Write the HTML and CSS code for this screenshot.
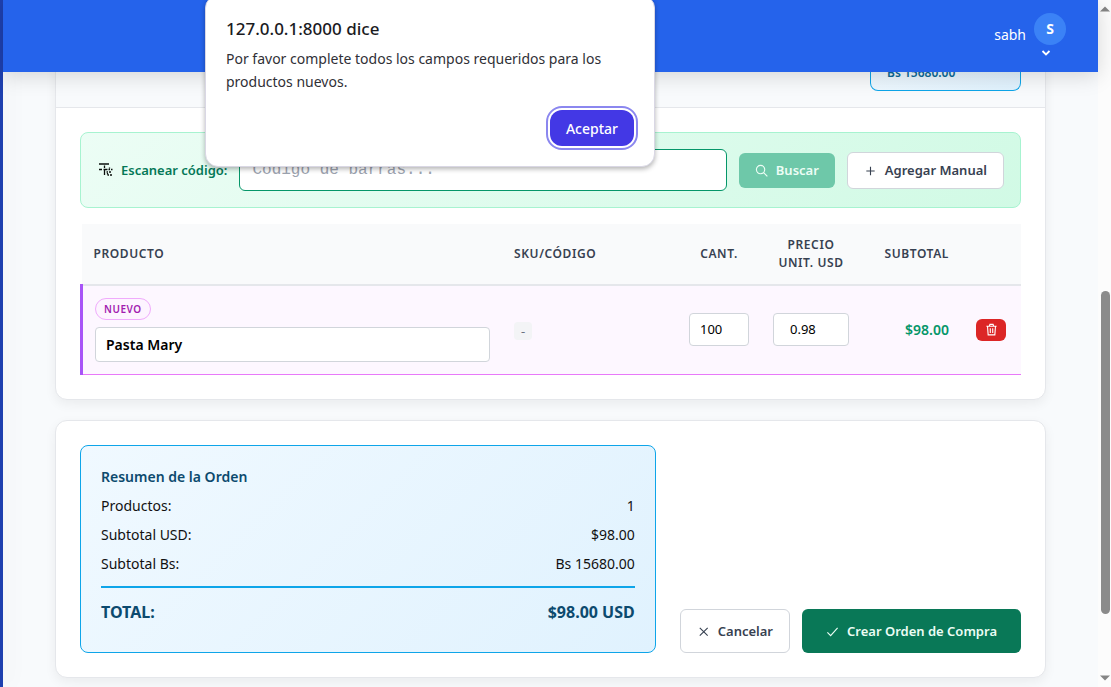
FILE: index.html
```html
<!DOCTYPE html>
<html lang="es">
<head>
<meta charset="utf-8">
<meta name="viewport" content="width=device-width, initial-scale=1">
<title>Orden de Compra</title>
<link rel="stylesheet" href="styles.css">
</head>
<body>
<div class="app">
  <div class="sidebar-edge"></div>
  <div class="page">
    <header class="topbar">
      <span class="user-name">sabh</span>
      <button class="user-menu" type="button" aria-label="Menú de usuario">
        <span class="avatar">S</span>
        <svg class="chevron" viewBox="0 0 12 8" aria-hidden="true"><path d="M2.500 2 6 5.500 9.500 2" fill="none" stroke="currentColor" stroke-width="1.800"/></svg>
      </button>
    </header>
    <main class="content">
      <section class="card card-products">
        <div class="card-head"><div class="rate">Bs 15680.00</div></div>
        <div class="card-body">
          <form class="scan">
            <label class="scan-label" for="code">
              <svg class="scan-icon" viewBox="0 0 16 16" aria-hidden="true"><path d="M2 2h10M2 7.500h3M6.500 7.500h4M11.500 7.500h1.500M14 7.500h1.500M7.500 3.500v2.500M7.500 8v5M9.500 10h1.500M12 10h2M12.500 5.500v1M10.500 13h1.500M13 13h2M10.500 11v1.500" fill="none" stroke="#0b0f0d" stroke-width="1.300"/></svg>
              Escanear código:
            </label>
            <input class="scan-input" id="code" type="text" placeholder="Código de barras...">
            <button class="btn btn-search" type="button" disabled>
              <svg class="icon" viewBox="0 0 14 14" aria-hidden="true"><circle cx="6" cy="6" r="4.500"/><path d="m9.300 9.300 4 4"/></svg>Buscar
            </button>
            <button class="btn btn-outline" type="button">
              <svg class="icon" viewBox="0 0 14 14" aria-hidden="true"><path d="M7 3v9M2.500 7.500h9"/></svg>Agregar Manual
            </button>
          </form>
          <table class="items">
            <colgroup><col><col class="col-sku"><col class="col-qty"><col class="col-price"><col class="col-sub"><col class="col-act"></colgroup>
            <thead>
              <tr><th class="left">Producto</th><th class="left">SKU/Código</th><th>Cant.</th><th>Precio Unit. USD</th><th class="right">Subtotal</th><th></th></tr>
            </thead>
            <tbody>
              <tr>
                <td><div class="product"><span class="tag">NUEVO</span><input class="field field-name" type="text" value="Pasta Mary" aria-label="Producto"></div></td>
                <td><span class="sku">-</span></td>
                <td class="entry"><input class="field field-num" type="text" value="100" aria-label="Cantidad"></td>
                <td class="entry"><input class="field field-num field-price" type="text" value="0.98" aria-label="Precio unitario USD"></td>
                <td class="entry right amount">$98.00</td>
                <td class="entry center"><button class="btn-delete" type="button" aria-label="Eliminar">
                  <svg viewBox="0 0 14 14" aria-hidden="true"><path d="M1.500 3.500h11M4.700 3.500l.6-2h3.400l.6 2M2.700 3.500l.7 9.300h7.200l.7-9.300M5.700 5.700v5M8.300 5.700v5"/></svg>
                </button></td>
              </tr>
            </tbody>
          </table>
        </div>
      </section>
      <section class="card card-footer">
        <div class="summary">
          <h2>Resumen de la Orden</h2>
          <div class="line"><span>Productos:</span><span>1</span></div>
          <div class="line"><span>Subtotal USD:</span><span>$98.00</span></div>
          <div class="line"><span>Subtotal Bs:</span><span>Bs 15680.00</span></div>
          <div class="line total"><span>TOTAL:</span><span>$98.00 USD</span></div>
        </div>
        <div class="actions">
          <button class="btn btn-outline btn-large" type="button">
            <svg class="icon" viewBox="0 0 14 14" aria-hidden="true"><path d="m3 3 8.500 8.500M11.500 3 3 11.500"/></svg>Cancelar
          </button>
          <button class="btn btn-primary btn-large" type="button">
            <svg class="icon" viewBox="0 0 14 14" aria-hidden="true"><path d="m1.500 8 3.500 3.500L12.500 3"/></svg>Crear Orden de Compra
          </button>
        </div>
      </section>
    </main>
  </div>
  <div class="scrollbar" aria-hidden="true">
    <svg class="arrow" viewBox="0 0 10 6"><path d="M0 5.500 5 .5l5 5z"/></svg>
    <div class="track"><div class="thumb"></div></div>
    <svg class="arrow" viewBox="0 0 10 6"><path d="M0 .5 5 5.500l5-5z"/></svg>
  </div>
</div>
<dialog class="alert" open aria-labelledby="alert-title">
  <h1 id="alert-title">127.0.0.1:8000 dice</h1>
  <p>Por favor complete todos los campos requeridos para los productos nuevos.</p>
  <button class="accept" type="button">Aceptar</button>
</dialog>
</body>
</html>
```

FILE: styles.css
```css
* { box-sizing: border-box; }

body {
  margin: 0;
  font: 14px/21px "Noto Sans", sans-serif;
  color: #111;
  background: #f8fafc;
  overflow: hidden;
}

button, input { font-family: inherit; margin: 0; }

.app { display: flex; height: 100vh; overflow: hidden; }

.sidebar-edge {
  flex: 0 0 3px;
  background: #1e40af;
  box-shadow: 4px 0 20px rgba(0, 0, 0, .1);
  z-index: 3;
}

.page { flex: 1; min-width: 0; }

.topbar {
  position: relative;
  z-index: 4;
  display: flex;
  justify-content: flex-end;
  align-items: center;
  gap: 8px;
  height: 72px;
  padding: 0 32px 3px;
  color: #fff;
  background: #2563eb;
  box-shadow: 0 4px 20px rgba(0, 0, 0, .15);
}

.user-menu {
  display: flex;
  flex-direction: column;
  align-items: center;
  gap: 4px;
  padding: 0;
  border: 0;
  color: #fff;
  background: none;
}

.avatar {
  width: 32px;
  height: 32px;
  border-radius: 50%;
  background: #3b82f6;
  font-size: 14px;
  line-height: 32px;
  font-weight: 700;
}

.chevron { width: 12px; height: 8px; margin-right: 8px; }

.content {
  display: flex;
  flex-direction: column;
  gap: 20px;
  margin-top: -20px;
  padding: 0 52px;
}

.card {
  border: 1px solid #e5e7eb;
  border-radius: 12px;
  background: #fff;
  box-shadow: 0 4px 12px rgba(0, 0, 0, .06);
}

.card-head {
  display: flex;
  justify-content: flex-end;
  padding: 0 24px 16px;
  border-bottom: 1px solid #e5e7eb;
  background: #f8fafc;
}

.rate {
  width: 151px;
  padding: 11px 16px 8px;
  border: 1px solid #0ea5e9;
  border-top: 0;
  border-radius: 0 0 8px 8px;
  background: linear-gradient(135deg, #f0f9ff, #e0f2fe);
  color: #0c6a98;
  font-size: 12px;
  line-height: 18px;
  font-weight: 600;
}

.card-body { padding: 24px; }

.scan {
  display: flex;
  align-items: center;
  gap: 12px;
  margin-bottom: 16px;
  padding: 16px;
  border: 1px solid #a7f3d0;
  border-radius: 8px;
  background: linear-gradient(135deg, #ecfdf5, #d1fae5);
}

.scan-label {
  display: flex;
  align-items: center;
  gap: 8px;
  color: #047857;
  font-size: 13px;
  font-weight: 600;
  white-space: nowrap;
}

.scan-icon { width: 16px; height: 16px; }

.scan-input {
  flex: 1;
  min-width: 0;
  height: 42px;
  padding: 0 12px;
  border: 1px solid #059669;
  border-radius: 6px;
  background: #fff;
  font: 16px "Liberation Mono", monospace;
}

.scan-input::placeholder { color: #9ca3af; }

.btn {
  display: inline-flex;
  align-items: center;
  justify-content: center;
  gap: 8px;
  padding: 8px 16px;
  border: 0;
  border-radius: 6px;
  font-size: 13px;
  line-height: 19px;
  font-weight: 600;
  white-space: nowrap;
}

.icon { width: 13px; height: 13px; fill: none; stroke: currentColor; stroke-width: 1.2; }

.btn-search { color: #edfdf5; background: #6ec8a9; }
.btn-outline { border: 1px solid #d1d5db; color: #374151; background: #fff; }
.btn-large { height: 44px; }
.btn-primary { padding: 8px 24px; color: #ecfdf5; background: #097857; }

.items {
  width: 100%;
  border-collapse: collapse;
  table-layout: fixed;
}

.col-sku { width: 175px; }
.col-qty { width: 84px; }
.col-price { width: 100px; }
.col-sub { width: 100px; }
.col-act { width: 60px; }

.items th {
  height: 61px;
  padding: 12px;
  border-bottom: 2px solid #e5e7eb;
  background: #f9fafb;
  color: #374151;
  font-size: 12px;
  line-height: 18px;
  font-weight: 600;
  letter-spacing: .05em;
  text-transform: uppercase;
  text-align: center;
}

.items td { padding: 12px; border-bottom: 1px solid #e879f9; background: #fdf7ff; }
.items td:first-child { border-left: 3px solid #a855f7; }
.items td.entry { padding-bottom: 14px; }
.items .left { text-align: left; }
.items .right { text-align: right; }
.items .center { text-align: center; }
.items .amount { color: #059669; font-weight: 600; }

.product { display: flex; flex-direction: column; align-items: flex-start; gap: 7px; }

.tag {
  padding: 2px 8px;
  border: 1px solid #f0abfc;
  border-radius: 11px;
  background: #fdf4ff;
  color: #a21caf;
  font-size: 10px;
  line-height: 16px;
  font-weight: 600;
  letter-spacing: .05em;
}

.field {
  display: block;
  width: 100%;
  height: 33px;
  padding: 0 10px;
  border: 1px solid #d1d5db;
  border-radius: 4px;
  background: #fff;
  color: #000;
  font-size: 13px;
}

.field-name { height: 35px; font-size: 14px; font-weight: 600; }
.field-price { padding: 0 16px; }

.sku {
  display: inline-block;
  padding: 0 7px;
  border-radius: 4px;
  background: #f3f4f6;
  color: #6b7280;
  font-size: 13px;
  line-height: 18px;
}

.btn-delete {
  display: inline-flex;
  align-items: center;
  justify-content: center;
  width: 30px;
  height: 22px;
  padding: 0;
  border: 0;
  border-radius: 6px;
  background: #dc2626;
  vertical-align: middle;
}

.btn-delete svg { width: 13px; height: 13px; fill: none; stroke: #fff; stroke-width: 1.2; }

.card-footer { display: flex; gap: 24px; padding: 24px; }

.summary {
  flex: 1;
  padding: 20px 20px 12px;
  border: 1px solid #0ea5e9;
  border-radius: 8px;
  background: linear-gradient(135deg, #f0f9ff, #e0f2fe);
  padding-bottom: 20px;
}

.summary h2 { margin: 0 0 8px; color: #0c4a6e; font-size: 14px; line-height: 21px; font-weight: 600; }

.line { display: flex; justify-content: space-between; margin-bottom: 8px; }

.total {
  margin-top: 12px;
  padding-top: 12px;
  border-top: 2px solid #0ea5e9;
  color: #0c4a6e;
  font-size: 16px;
  line-height: 24px;
  font-weight: 700;
}

.actions { display: flex; align-items: flex-end; gap: 12px; }

.scrollbar {
  flex: 0 0 13px;
  display: flex;
  flex-direction: column;
  align-items: flex-end;
  padding: 6px 1px 6px 0;
  background: #fcfcfc;
}

.arrow { width: 10px; height: 6px; fill: #858585; }
.track { flex: 1; display: flex; flex-direction: column; width: 9px; padding: 279px 0 61px; }
.thumb { flex: 1; border-radius: 5px; background: #8b8b8b; }

.alert {
  position: absolute;
  z-index: 10;
  top: -5px;
  left: 205px;
  width: 450px;
  margin: 0;
  padding: 20px;
  display: flex;
  flex-direction: column;
  border: 1px solid #d9d7e4;
  border-radius: 13px;
  background: #fff;
  color: #303036;
  box-shadow: 0 2px 5px rgba(0, 0, 0, .3);
}

.alert h1 { margin: 0; color: #1b1b1f; font-size: 17px; line-height: 26px; font-weight: 500; }
.alert p { margin: 5px 0 17px; font-size: 14px; line-height: 23px; }

.accept {
  align-self: flex-end;
  height: 36px;
  padding: 0 16px;
  border: 0;
  border-radius: 12px;
  outline: 2px solid #8b87ef;
  outline-offset: 2px;
  background: #4338e5;
  color: #fff;
  font-size: 14px;
  font-weight: 500;
}
```
